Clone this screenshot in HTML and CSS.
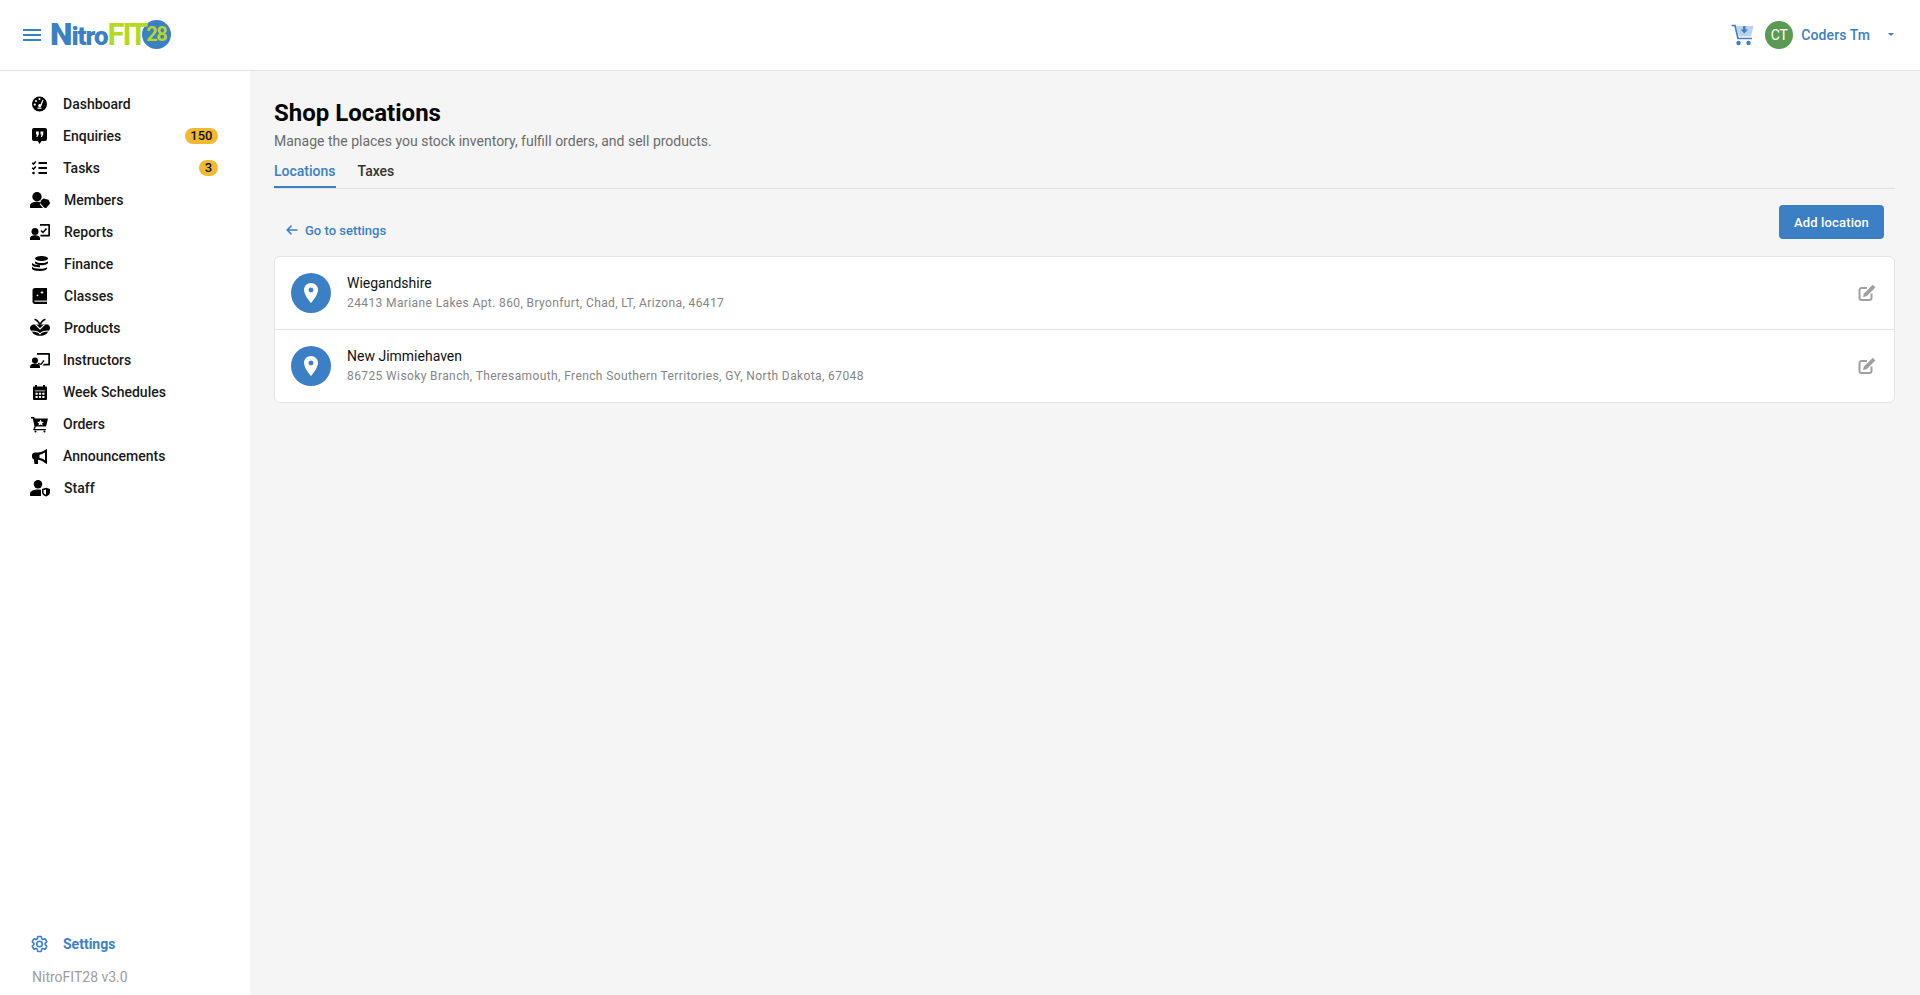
FILE: index.html
```html
<!DOCTYPE html>
<html lang="en">
<head>
    <meta charset="UTF-8">
    <meta name="viewport" content="width=device-width, initial-scale=1.0">
    <title>Shop Locations</title>
    <link rel="stylesheet" href="styles.css">
</head>
<body>
    <header class="topbar">
        <div class="brand">
            <svg class="menu-icon" width="18" height="12" viewBox="0 0 18 12"><path d="M0 0h18v2H0zM0 5h18v2H0zM0 10h18v2H0z"/></svg>
            <div class="logo">
                <span class="logo-nitro"><span class="logo-cap">N</span>itro</span><span class="logo-fit">FIT</span><span class="logo-num">28</span>
            </div>
        </div>
        <div class="account">
            <svg class="cart-icon" width="23" height="22" viewBox="0 0 23 22">
                <path d="M5 2h17.500L20 12.500H8z" fill="#b9d3ec"/>
                <path d="M.5 1.500h3.500L7 14.500h14" fill="none" stroke="#3b80c4" stroke-width="1.700"/>
                <circle cx="7.500" cy="19" r="2.200" fill="#3b80c4"/>
                <circle cx="17.500" cy="19" r="2.200" fill="#3b80c4"/>
                <path d="M12 2h2.500v3.500H17l-3.700 4-3.700-4H12z" fill="#3b80c4"/>
            </svg>
            <div class="avatar">CT</div>
            <span class="account-name">Coders Tm</span>
            <span class="caret"></span>
        </div>
    </header>

    <div class="layout">
        <aside class="sidebar">
            <nav class="nav">
                <a class="nav-item">
                    <svg class="nav-icon" viewBox="0 0 24 24"><circle cx="11.500" cy="12" r="7.500"/><path d="M12.200 13l2.300-5.200 1 .4-2 5.400z M9.500 15.500h4v1.300h-4z" fill="#fff"/><circle cx="8" cy="9" r="1.100" fill="#fff"/><circle cx="11.500" cy="7" r="1.100" fill="#fff"/><circle cx="6.800" cy="12.600" r="1.100" fill="#fff"/><circle cx="11.800" cy="13.600" r="1.600" fill="#fff"/></svg>
                    <span>Dashboard</span>
                </a>
                <a class="nav-item">
                    <svg class="nav-icon" viewBox="0 0 24 24"><path d="M6 4h11a2 2 0 012 2v9a2 2 0 01-2 2h-3.500L11.500 20l-1.800-3H6a2 2 0 01-2-2V6a2 2 0 012-2z"/><path d="M8 7.500h2.800v2.800L9.500 13H8.300l.8-2.500H8zM12.500 7.500h2.800v2.800L14 13h-1.200l.8-2.500h-1.100z" fill="#fff"/></svg>
                    <span>Enquiries</span>
                    <span class="badge">150</span>
                </a>
                <a class="nav-item">
                    <svg class="nav-icon" viewBox="0 0 24 24"><path d="M10.500 6h8.500v1.900h-8.500zM10.500 11h8.500v1.900h-8.500zM10.500 16h8.500v1.900h-8.500z"/><path d="M4.200 6.800l1.300 1.300 2.300-2.600M4.200 11.800l1.300 1.300 2.300-2.600" fill="none" stroke="#000" stroke-width="1.500"/><circle cx="5.500" cy="17" r="1.300"/></svg>
                    <span>Tasks</span>
                    <span class="badge">3</span>
                </a>
                <a class="nav-item wide">
                    <svg class="nav-icon" viewBox="0 0 24 24"><circle cx="9" cy="8.700" r="4.700"/><path d="M2 20v-2.500c0-2.500 3.500-3.800 7-3.800 1.500 0 3 .2 4.200.7L11.500 16l3.500 4z"/><path d="M15.500 10.500l5 1.300 1.700 3.500-4 4.700-2-.2-3.700-4.300.3-3z"/></svg>
                    <span>Members</span>
                </a>
                <a class="nav-item wide">
                    <svg class="nav-icon" viewBox="0 0 24 24"><path d="M12 4h9a1 1 0 011 1v10.500a1 1 0 01-1 1h-8.500v-1.700h7.800V5.700H12z"/><path d="M13 10.500l2 2 3.500-4" fill="none" stroke="#000" stroke-width="1.500"/><circle cx="7" cy="11.500" r="3.500"/><path d="M2 20v-1.500c0-2.200 2.500-3.200 5-3.200s5 1 5 3.200V20z"/></svg>
                    <span>Reports</span>
                </a>
                <a class="nav-item wide">
                    <svg class="nav-icon" viewBox="0 0 24 24"><ellipse cx="13.500" cy="6.500" rx="6.500" ry="2.500"/><path d="M7 9.200c1 1.200 3.500 1.800 6.500 1.800s5.500-.6 6.500-1.800v2c-1 1.200-3.500 2-6.500 2-2.800 0-5.500-.7-6.500-2z"/><path d="M4 10.800c.8 1.200 3.600 2.400 8 2.400v2c-4.400 0-7.200-1-8-2.300zM4 14.500c.8 1.300 3.600 2.300 8 2.300 3 0 5.400-.5 7-1.500v1.700c-1.300 1.300-4 2-7 2-4.400 0-7.200-.8-8-2.200z"/></svg>
                    <span>Finance</span>
                </a>
                <a class="nav-item wide">
                    <svg class="nav-icon" viewBox="0 0 24 24"><path d="M7 4h12v16H7c-1.700 0-2.500-1-2.500-2.500V6.500C4.500 5 5.300 4 7 4z"/><path d="M14 6.500l.6 1.400 1.400.6-1.400.6-.6 1.400-.6-1.400-1.400-.6 1.400-.6zM9.500 10l.4 1 1 .4-1 .4-.4 1-.4-1-1-.4 1-.4z" fill="#fff"/><path d="M6.500 16.600H19v1.100H6.500z" fill="#fff"/></svg>
                    <span>Classes</span>
                </a>
                <a class="nav-item wide">
                    <svg class="nav-icon" viewBox="0 0 24 24"><path d="M5 8.500h15c1.300.8 2 2 2 3.500s-.8 2.800-2 3.500l-1 2c-2 1.500-4.500 2.300-7 2.300s-5-.8-7-2.300l-1-2C2.800 14.800 2 13.500 2 12s1-2.800 3-3.500z"/><path d="M12 8.500C10.500 6 9 3.500 6.500 3.500M12 8.500c1.500-2.500 3-5 5.500-5" fill="none" stroke="#000" stroke-width="1.700"/><path d="M7.500 8.500l4.500 4.500 4.500-4.500M3.500 15c3.500 0 7 .8 8.500 3 1.500-2.200 5-3 8.500-3" fill="none" stroke="#fff" stroke-width="1.100"/></svg>
                    <span>Products</span>
                </a>
                <a class="nav-item">
                    <svg class="nav-icon" viewBox="0 0 24 24"><path d="M9 5h12a1 1 0 011 1v10.500a1 1 0 01-1 1h-6.500l1.500-1.700h4.300V6.700H9z"/><path d="M10 15.500l3 .8 3-3.800" fill="none" stroke="#000" stroke-width="1.300"/><circle cx="7" cy="12.500" r="3"/><path d="M2 20v-1.500c0-2 2.500-3 5-3s5 1 5 3V20z"/></svg>
                    <span>Instructors</span>
                </a>
                <a class="nav-item">
                    <svg class="nav-icon" viewBox="0 0 24 24"><path d="M7 5h2v1.500h6V5h2v1.500h1a1 1 0 011 1V19a1 1 0 01-1 1H6a1 1 0 01-1-1V7.500a1 1 0 011-1h1z"/><path d="M6.800 10.500h10.400v.8H6.800z M7.500 12.700h2.200v2H7.500zM10.900 12.700h2.200v2h-2.200zM14.300 12.700h2.200v2h-2.200zM7.500 16h2.200v2H7.500zM10.900 16h2.200v2h-2.200zM14.300 16h2.200v2h-2.200z" fill="#fff"/></svg>
                    <span>Week Schedules</span>
                </a>
                <a class="nav-item">
                    <svg class="nav-icon" viewBox="0 0 24 24"><path d="M3 5h3.200l.5 1.500H20l-2 8H8L6.800 17h11v1.300H5l1.500-4L4.800 6.500H3z"/><path d="M12.500 7.500l1 2.200 2.300.2-1.700 1.500.5 2.300-2.100-1.200-2.100 1.200.5-2.300-1.700-1.500 2.300-.2z" fill="#fff"/><circle cx="7.500" cy="19.500" r="1"/><circle cx="16.500" cy="19.500" r="1"/></svg>
                    <span>Orders</span>
                </a>
                <a class="nav-item">
                    <svg class="nav-icon" viewBox="0 0 24 24"><path d="M19 5v15l-2-1c-2-2-5-3-7-3.200V20H6.500l-.6-4.500C4.800 15 4 14 4 12.500v-1C4 9.500 5.500 8.500 7 8.500h3c2.500 0 5-1 7-2.500z"/><path d="M17 8.500c-2 1.300-4 2-5.500 2.200v3.400c2 .2 3.700.9 5.500 2.200z" fill="#fff"/></svg>
                    <span>Announcements</span>
                </a>
                <a class="nav-item wide">
                    <svg class="nav-icon" viewBox="0 0 24 24"><circle cx="10" cy="8.200" r="4.200"/><path d="M2 20v-2.500c0-2.500 4-4 8-4 1 0 2 .1 3 .3V20z"/><path d="M14 13l4-1.300 4 1.300v3.500c0 2-1.700 3.200-4 4-2.300-.8-4-2-4-4z"/><path d="M18 13.500v5.300c-1.500-.6-2.500-1.300-2.500-2.500v-2z" fill="#fff"/></svg>
                    <span>Staff</span>
                </a>
            </nav>
            <div class="sidebar-foot">
                <a class="nav-item active">
                    <svg class="nav-icon" viewBox="0 0 24 24"><g transform="translate(11.500 12) scale(.78) translate(-12 -12)"><path fill="none" stroke="#3b80c4" stroke-width="2" d="M19.140 12.940c.04-.3.060-.61.060-.94 0-.32-.02-.64-.07-.94l2.030-1.580c.18-.14.230-.41.120-.61l-1.920-3.320c-.12-.22-.37-.29-.59-.22l-2.390.96c-.5-.38-1.030-.7-1.620-.94l-.36-2.540c-.04-.24-.24-.41-.48-.41h-3.840c-.24 0-.43.170-.47.410l-.36 2.540c-.59.240-1.130.570-1.620.940l-2.390-.96c-.22-.08-.47 0-.59.220L2.740 8.870c-.12.210-.08.470.120.610l2.030 1.580c-.05.300-.09.630-.09.940s.020.640.070.940l-2.030 1.580c-.18.140-.23.410-.12.610l1.920 3.320c.12.220.37.290.59.220l2.390-.96c.5.380 1.030.7 1.620.94l.36 2.540c.05.240.24.410.48.410h3.840c.24 0 .44-.17.470-.41l.36-2.540c.59-.24 1.130-.56 1.620-.94l2.390.96c.22.080.47 0 .59-.22l1.920-3.320c.12-.22.070-.47-.12-.61l-2.010-1.580zM12 15.600c-1.980 0-3.600-1.620-3.600-3.600s1.620-3.600 3.600-3.600 3.600 1.620 3.600 3.600-1.620 3.600-3.600 3.600z"/></g></svg>
                    <span>Settings</span>
                </a>
                <p class="version">NitroFIT28 v3.0</p>
            </div>
        </aside>

        <main class="content">
            <h1>Shop Locations</h1>
            <p class="subtitle">Manage the places you stock inventory, fulfill orders, and sell products.</p>

            <div class="tabs">
                <a class="tab active">Locations</a>
                <a class="tab">Taxes</a>
            </div>

            <div class="toolbar">
                <a class="back-link">
                    <svg width="12" height="12" viewBox="0 0 12 12"><path d="M11.500 5.200H3l3-3L5 1.100.1 6 5 10.900l1-1.100-3-3h8.500z"/></svg>
                    Go to settings
                </a>
                <button class="add-btn">Add location</button>
            </div>

            <div class="card">
                <div class="location">
                    <div class="pin">
                        <svg width="24" height="24" viewBox="0 0 24 24"><path d="M12 2C8.130 2 5 5.130 5 9c0 5.250 7 13 7 13s7-7.750 7-13c0-3.870-3.130-7-7-7zm0 9.500a2.500 2.500 0 010-5 2.500 2.500 0 010 5z"/></svg>
                    </div>
                    <div class="location-text">
                        <div class="location-name">Wiegandshire</div>
                        <div class="location-address">24413 Mariane Lakes Apt. 860, Bryonfurt, Chad, LT, Arizona, 46417</div>
                    </div>
                    <svg class="edit-icon" width="18" height="18" viewBox="0 0 18 18"><path d="M13.500 9.500V14a2 2 0 01-2 2H3.500a2 2 0 01-2-2V6a2 2 0 012-2h5.500" fill="none" stroke="#a0a0a0" stroke-width="2"/><path d="M14.800.8l2.600 2.600L8.600 12.200l-3.600.9.900-3.600z" fill="#a0a0a0"/></svg>
                </div>
                <div class="location">
                    <div class="pin">
                        <svg width="24" height="24" viewBox="0 0 24 24"><path d="M12 2C8.130 2 5 5.130 5 9c0 5.250 7 13 7 13s7-7.750 7-13c0-3.870-3.130-7-7-7zm0 9.500a2.500 2.500 0 010-5 2.500 2.500 0 010 5z"/></svg>
                    </div>
                    <div class="location-text">
                        <div class="location-name">New Jimmiehaven</div>
                        <div class="location-address">86725 Wisoky Branch, Theresamouth, French Southern Territories, GY, North Dakota, 67048</div>
                    </div>
                    <svg class="edit-icon" width="18" height="18" viewBox="0 0 18 18"><path d="M13.500 9.500V14a2 2 0 01-2 2H3.500a2 2 0 01-2-2V6a2 2 0 012-2h5.500" fill="none" stroke="#a0a0a0" stroke-width="2"/><path d="M14.800.8l2.600 2.600L8.600 12.200l-3.600.9.900-3.600z" fill="#a0a0a0"/></svg>
                </div>
            </div>
        </main>
    </div>
</body>
</html>
```

FILE: styles.css
```css
* {
    box-sizing: border-box;
}
body {
    margin: 0;
    height: 100vh;
    overflow: hidden;
    display: flex;
    flex-direction: column;
    font-family: Roboto, "Liberation Sans", sans-serif;
    font-size: 14px;
    background-color: #f5f5f5;
    color: #111;
}

/* top bar */
.topbar {
    flex: none;
    height: 71px;
    display: flex;
    align-items: center;
    justify-content: space-between;
    padding: 0 26px 1px 23px;
    background: white;
    border-bottom: 1px solid #e3e3e3;
}
.brand {
    display: flex;
    align-items: center;
    gap: 9px;
}
.menu-icon {
    fill: #3b80c4;
}
.logo {
    display: flex;
    align-items: center;
    font-weight: 900;
    line-height: 30px;
}
.logo-nitro {
    color: #3b80c4;
    font-size: 26px;
    letter-spacing: -1px;
}
.logo-cap {
    font-size: 32px;
}
.logo-fit {
    position: relative;
    z-index: 1;
    color: #b5d91f;
    font-size: 31px;
    font-weight: 700;
    letter-spacing: -2.200px;
}
.logo-num {
    width: 29px;
    height: 29px;
    margin-left: -4px;
    border-radius: 50%;
    background: #3b80c4;
    color: #b5d91f;
    font-size: 20px;
    font-weight: 700;
    line-height: 29px;
    text-align: center;
    letter-spacing: -1.500px;
}
.account {
    display: flex;
    align-items: center;
}
.cart-icon {
    margin-right: 11px;
}
.avatar {
    width: 28px;
    height: 28px;
    margin-right: 8px;
    border-radius: 50%;
    background: #5b9a52;
    color: white;
    text-align: center;
    line-height: 28px;
}
.account-name {
    color: #3b80c4;
    font-weight: 500;
    letter-spacing: 0.1px;
}
.caret {
    width: 0;
    height: 0;
    margin-left: 18px;
    border-left: 3.500px solid transparent;
    border-right: 3.500px solid transparent;
    border-top: 3.500px solid #3b80c4;
}

/* sidebar */
.layout {
    flex: 1;
    display: flex;
    min-height: 0;
}
.sidebar {
    flex: none;
    width: 250px;
    display: flex;
    flex-direction: column;
    justify-content: space-between;
    padding: 16.500px 0 8px;
    background: white;
}
.nav-item {
    height: 32px;
    display: flex;
    align-items: center;
    gap: 12px;
    padding: 0 32px 0 28px;
    font-weight: 500;
    color: #1a1a1a;
}
.nav-icon {
    flex: none;
    width: 24px;
    height: 24px;
    margin-right: -1px;
    fill: #000;
}
.nav-item.wide .nav-icon {
    margin-right: 0;
}
.nav-item.active {
    color: #3b80c4;
    font-weight: 700;
}
.badge {
    margin-left: auto;
    min-width: 19px;
    height: 16px;
    padding: 0 5.500px;
    border-radius: 8px;
    background: #f0b930;
    color: #111;
    font-size: 13px;
    font-weight: 500;
    line-height: 16px;
    text-align: center;
}
.version {
    margin: 7px 0 0 32px;
    height: 20px;
    line-height: 20px;
    color: #9e9e9e;
}

/* main */
.content {
    flex: 1;
    min-width: 0;
    padding: 26px 25px 0 24px;
}
h1 {
    margin: 0;
    font-size: 24px;
    font-weight: 700;
    line-height: 32px;
    color: #050505;
}
.subtitle {
    margin: 2px 0 0;
    line-height: 20px;
    color: #6b6b6b;
}
.tabs {
    display: flex;
    gap: 22px;
    margin-top: 1px;
    border-bottom: 1px solid #e0e0e0;
}
.tab {
    height: 36px;
    padding-top: 9px;
    line-height: 20px;
    font-weight: 500;
    color: #333;
}
.tab.active {
    color: #3b80c4;
    border-bottom: 2px solid #3b80c4;
}
.toolbar {
    display: flex;
    align-items: flex-end;
    justify-content: space-between;
    margin-top: 16px;
    padding: 0 11px 0 12px;
}
.back-link {
    display: flex;
    align-items: center;
    gap: 7px;
    height: 20px;
    margin-bottom: -1px;
    font-size: 13px;
    font-weight: 500;
    color: #3b80c4;
}
.back-link svg {
    fill: #3b80c4;
}
.add-btn {
    width: 105px;
    height: 34px;
    padding: 0;
    border: none;
    border-radius: 4px;
    background: #3b80c4;
    color: white;
    font-family: inherit;
    font-size: 13px;
    font-weight: 500;
    letter-spacing: 0.15px;
}
.card {
    margin-top: 17px;
    background: white;
    border: 1px solid #e4e4e4;
    border-radius: 6px;
}
.location {
    height: 72px;
    display: flex;
    align-items: center;
    padding: 0 18px 0 16px;
}
.location + .location {
    height: 73px;
    border-top: 1px solid #e4e4e4;
}
.pin {
    width: 40px;
    height: 40px;
    display: flex;
    align-items: center;
    justify-content: center;
    border-radius: 50%;
    background: #3b80c4;
}
.pin svg {
    fill: white;
}
.location-text {
    flex: 1;
    margin-left: 16px;
}
.location-name {
    line-height: 20px;
    color: #111;
}
.location-address {
    line-height: 20px;
    font-size: 12px;
    color: #858585;
    letter-spacing: 0.39px;
}
```
